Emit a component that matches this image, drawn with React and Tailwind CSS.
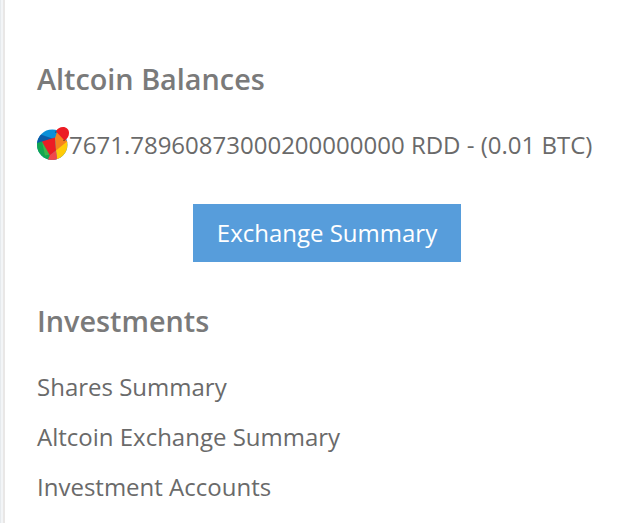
import React from "react";

const links = ["Shares Summary", "Altcoin Exchange Summary", "Investment Accounts"];

const ReddcoinIcon = () => (
  <svg viewBox="0 0 32 34" className="w-8 h-[34px] shrink-0">
    <defs>
      <clipPath id="coin">
        <circle cx="15.2" cy="17.8" r="15.2" />
      </clipPath>
    </defs>
    <g clipPath="url(#coin)">
      <rect width="32" height="34" fill="#0a8fd8" />
      <path d="M0 6l5 2 12 4-12 3-5 2z" fill="#0b5ba8" />
      <path d="M0 16l5-1.5 9 13-3 7H0z" fill="#12a650" />
      <path d="M5 14.5l8 13-5 1z" fill="#3db54a" />
      <path d="M5 14.5l13-4 1 13-6 5z" fill="#ec1c24" />
      <path d="M18 11l2-6 11 10-12 9z" fill="#f5821f" />
      <path d="M32 13l-13 10.5 1 11h12z" fill="#ffcb08" />
      <path d="M13 28l6-4.5 1.5 11H10z" fill="#f0484c" />
    </g>
    <path d="M19 4.5c1-3 4-4.5 7-4.5 3.5 0 6 2.500 6 6 0 3-1.500 6-4.500 7.500z" fill="#ec1c24" />
    <circle cx="18.8" cy="5" r="0.6" fill="#222" />
    <circle cx="27" cy="13.3" r="0.6" fill="#222" />
  </svg>
);

const App = () => {
  return (
    <div className="flex h-[523px] overflow-hidden bg-white font-['Open_Sans',sans-serif] text-[#6a6a6a]">
      <div className="w-[5px] shrink-0 bg-[#f3f5f7] border-l border-l-[#e6eaed] border-r-2 border-r-[#e9e7e6]" />
      <div className="flex-1 pl-8">
        <h2 className="mt-[59px] h-10 leading-10 text-[28.8px] font-semibold text-[#7a7a7a]">
          Altcoin Balances
        </h2>
        <div className="mt-[25px] flex items-center h-10 text-[24px] whitespace-nowrap">
          <ReddcoinIcon />
          <span className="pt-0.5">7671.78960873000200000000 RDD - (0.01 BTC)</span>
        </div>
        <button className="block mt-[40px] ml-[156px] w-[268px] h-[58px] bg-[#579ddb] text-white text-[24px]">
          Exchange Summary
        </button>
        <h2 className="mt-[39px] h-10 leading-10 text-[28.8px] font-semibold text-[#7a7a7a]">
          Investments
        </h2>
        <ul className="mt-[21px] text-[24px] leading-[50px]">
          {links.map((link) => (
            <li key={link}>{link}</li>
          ))}
        </ul>
      </div>
    </div>
  );
};

export default App;
